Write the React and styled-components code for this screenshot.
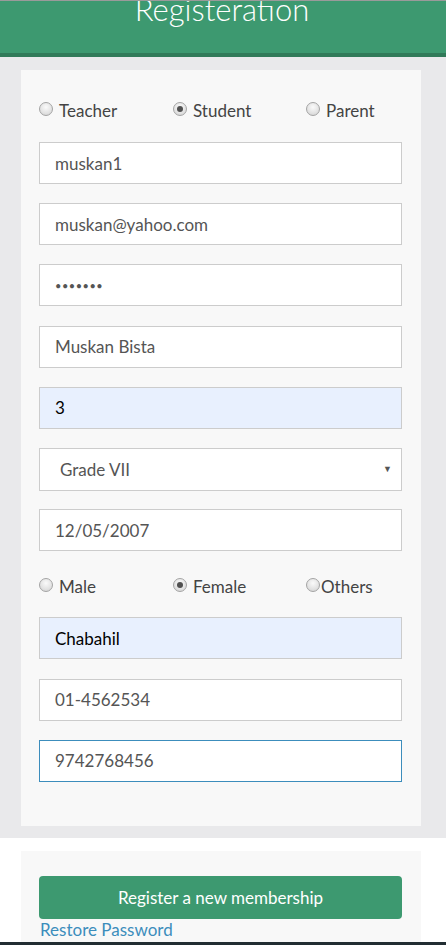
import React from 'react';
import styled, { createGlobalStyle } from 'styled-components';

const GlobalStyle = createGlobalStyle`
    body {
        margin: 0;
        background: #ffffff;
        font-family: Lato, "Open Sans", sans-serif;
    }
    * {
        box-sizing: border-box;
    }
`;

function App() {
    return (
        <Page>
            <GlobalStyle />
            <Header>
                <Title>Registeration</Title>
            </Header>
            <FormSection>
                <Card>
                    <RadioRow>
                        <RadioLabel><Radio type="radio" name="role" />Teacher</RadioLabel>
                        <RadioLabel><Radio type="radio" name="role" defaultChecked />Student</RadioLabel>
                        <RadioLabel><Radio type="radio" name="role" />Parent</RadioLabel>
                    </RadioRow>
                    <Field type="text" defaultValue="muskan1" />
                    <Field type="text" defaultValue="muskan@yahoo.com" />
                    <Field type="password" defaultValue="muskan1" $password />
                    <Field type="text" defaultValue="Muskan Bista" />
                    <Field type="text" defaultValue="3" $autofill />
                    <SelectWrap>
                        <Select defaultValue="7">
                            <option value="7">Grade VII</option>
                        </Select>
                        <Arrow>▼</Arrow>
                    </SelectWrap>
                    <Field type="text" defaultValue="12/05/2007" />
                    <RadioRow $gender>
                        <RadioLabel><Radio type="radio" name="gender" />Male</RadioLabel>
                        <RadioLabel><Radio type="radio" name="gender" defaultChecked />Female</RadioLabel>
                        <RadioLabel $tight><Radio type="radio" name="gender" />Others</RadioLabel>
                    </RadioRow>
                    <Field type="text" defaultValue="Chabahil" $autofill />
                    <Field type="text" defaultValue="01-4562534" />
                    <Field type="text" defaultValue="9742768456" $focused />
                </Card>
            </FormSection>
            <ActionSection>
                <ActionCard>
                    <SubmitButton type="button">Register a new membership</SubmitButton>
                    <RestoreLink href="#">Restore Password</RestoreLink>
                </ActionCard>
            </ActionSection>
            <Footer />
        </Page>
    );
}

export default App;


const Page = styled.div`
    display: flex;
    flex-direction: column;
    width: 446px;
    min-height: 945px;
    overflow: hidden;
`;

const Header = styled.div`
    height: 57px;
    flex-shrink: 0;
    background: #3d9970;
    border-top: 1px solid #9a9a9a;
    border-bottom: 4px solid #317a59;
    display: flex;
    justify-content: center;
    overflow: hidden;
`;

const Title = styled.h1`
    margin: -10px 0 0 -2px;
    font-size: 31px;
    line-height: 36px;
    font-weight: 300;
    color: #ffffff;
    font-family: Lato, "Open Sans", sans-serif;
`;

const FormSection = styled.div`
    background: #e9e9eb;
    padding: 13px 25px 12px 21px;
`;

const Card = styled.div`
    background: #f8f8f8;
    padding: 26px 19px 44px 18px;
    display: flex;
    flex-direction: column;
`;

const RadioRow = styled.div`
    display: grid;
    grid-template-columns: 134px 133px 1fr;
    height: ${props => props.$gender ? '30px' : '28px'};
    align-items: center;
    margin-bottom: ${props => props.$gender ? '17px' : '18px'};
    padding-top: ${props => props.$gender ? '2px' : '0'};
`;

const RadioLabel = styled.label`
    display: flex;
    align-items: center;
    gap: ${props => props.$tight ? '1px' : '6px'};
    font-size: 17px;
    color: #444;
`;

const Radio = styled.input`
    appearance: none;
    margin: 0;
    width: 14px;
    height: 14px;
    border-radius: 50%;
    border: 1px solid #a4a4a4;
    background: radial-gradient(circle at 50% 35%, #fafafa 0%, #e2e2e2 60%, #cfcfcf 100%);
    position: relative;
    top: -1px;

    &:checked::after {
        content: '';
        position: absolute;
        left: 3px;
        top: 3px;
        width: 6px;
        height: 6px;
        border-radius: 50%;
        background: #505050;
    }
`;

const Field = styled.input`
    display: block;
    width: 100%;
    height: 42px;
    margin: 0 0 19.2px;
    padding: 0 15px;
    font-size: ${props => props.$password ? '11px' : '17px'};
    letter-spacing: ${props => props.$password ? '0.5px' : 'normal'};
    font-family: Lato, "Open Sans", sans-serif;
    color: ${props => props.$autofill ? '#000' : '#555'};
    background: ${props => props.$autofill ? '#e8f0fe' : '#fff'};
    border: 1px solid ${props => props.$focused ? '#3c8dbc' : '#cccccc'};
    border-radius: 0;
    outline: none;
    &:last-child {
        margin-bottom: 0;
    }
`;

const SelectWrap = styled.div`
    position: relative;
    margin-bottom: 18.2px;
`;

const Select = styled.select`
    display: block;
    width: 100%;
    height: 43px;
    padding: 0 20px;
    appearance: none;
    font-size: 17px;
    font-family: Lato, "Open Sans", sans-serif;
    color: #555;
    background: #fff;
    border: 1px solid #cccccc;
    border-radius: 0;
    outline: none;
`;

const Arrow = styled.span`
    position: absolute;
    right: 10px;
    top: 15px;
    font-size: 9px;
    color: #555;
    pointer-events: none;
`;

const ActionSection = styled.div`
    background: #ffffff;
    padding: 13px 25px 0 21px;
`;

const ActionCard = styled.div`
    background: #f8f8f8;
    padding: 25px 19px 0 18px;
    height: 91px;
    display: flex;
    flex-direction: column;
`;

const SubmitButton = styled.button`
    width: 100%;
    height: 43px;
    flex-shrink: 0;
    background: #3d9970;
    color: #ffffff;
    border: none;
    border-radius: 4px;
    font-size: 17px;
    font-family: Lato, "Open Sans", sans-serif;
    cursor: pointer;
`;

const RestoreLink = styled.a`
    align-self: flex-start;
    margin-left: 1px;
    font-size: 17px;
    line-height: 22px;
    color: #3c8dbc;
    text-decoration: none;
`;

const Footer = styled.div`
    height: 20px;
    background: #222d32;
`;
